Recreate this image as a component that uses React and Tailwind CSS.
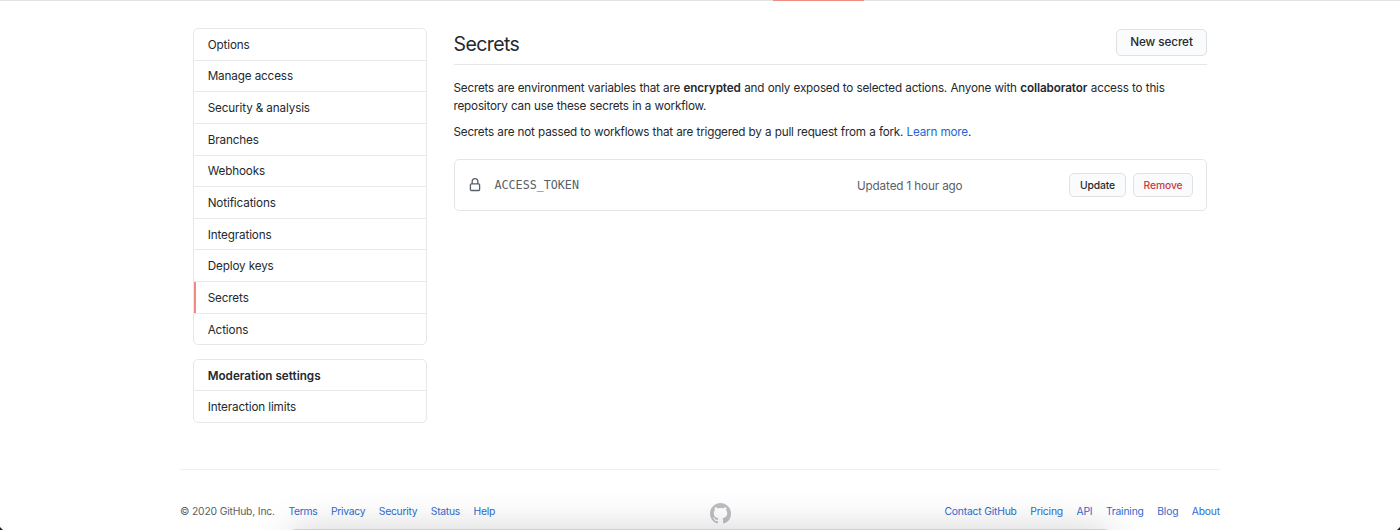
import React from "react";

const settings = [
  "Options",
  "Manage access",
  "Security & analysis",
  "Branches",
  "Webhooks",
  "Notifications",
  "Integrations",
  "Deploy keys",
  "Secrets",
  "Actions",
];

function Lock() {
  return (
    <svg viewBox="0 0 16 16" className="h-[14px] w-[14px] shrink-0" fill="#586069">
      <path
        fillRule="evenodd"
        d="M4 4v2h-.25A1.75 1.75 0 002 7.75v5.5c0 .966.784 1.75 1.75 1.75h8.5A1.75 1.75 0 0014 13.25v-5.5A1.75 1.75 0 0012.25 6H12V4a4 4 0 10-8 0zm6.5 2V4a2.5 2.5 0 10-5 0v2h5zM12 7.5h.25a.25.25 0 01.25.25v5.5a.25.25 0 01-.25.25h-8.5a.25.25 0 01-.25-.25v-5.5a.25.25 0 01.25-.25H12z"
      />
    </svg>
  );
}

function Mark() {
  return (
    <svg viewBox="0 0 16 16" className="h-[21px] w-[21px]" fill="#bcbfc3">
      <path
        fillRule="evenodd"
        d="M8 0C3.58 0 0 3.58 0 8c0 3.54 2.29 6.53 5.47 7.59.4.07.55-.17.55-.38 0-.19-.01-.82-.01-1.49-2.01.37-2.53-.49-2.69-.94-.09-.23-.48-.94-.82-1.13-.28-.15-.68-.52-.01-.53.63-.01 1.08.58 1.23.82.72 1.21 1.87.87 2.33.66.07-.52.28-.87.51-1.07-1.78-.2-3.64-.89-3.64-3.95 0-.87.31-1.59.82-2.15-.08-.2-.36-1.02.08-2.12 0 0 .67-.21 2.2.82.64-.18 1.32-.27 2-.27.68 0 1.36.09 2 .27 1.53-1.04 2.2-.82 2.2-.82.44 1.1.16 1.92.08 2.12.51.56.82 1.27.82 2.15 0 3.07-1.87 3.75-3.65 3.95.29.25.54.73.54 1.48 0 1.07-.01 1.93-.01 2.2 0 .21.15.46.55.38A8.013 8.013 0 0016 8c0-4.42-3.58-8-8-8z"
      />
    </svg>
  );
}

function FooterLinks({ items }) {
  return (
    <nav className="flex gap-[13.5px] text-[#2f6bd0]">
      {items.map((t) => (
        <a key={t} href="#">
          {t}
        </a>
      ))}
    </nav>
  );
}

export default function App() {
  return (
    <div className="relative h-[530px] overflow-hidden bg-white font-['Inter','Liberation_Sans',sans-serif] text-[11.7px] tracking-[-0.13px] text-[#24292e]">
      <div className="flex h-px bg-[#e1e2e3] pl-[773px]">
        <div className="w-[91px] bg-[#ee8b80]" />
      </div>

      <div className="flex h-[441px] gap-[26.5px] pl-[193px] pt-[27px]">
        <aside className="w-[234px] shrink-0">
          <ul className="overflow-hidden rounded-[5px] border border-[#e6e7e9]">
            {settings.map((t) => (
              <li
                key={t}
                className={
                  "flex h-[31.65px] items-center border-b border-[#e9eaec] pl-[13.7px] pt-[2.6px] last:h-[30.6px] last:border-b-0 " +
                  (t === "Secrets" ? "shadow-[inset_2px_0_0_#ee8b80]" : "")
                }
              >
                {t}
              </li>
            ))}
          </ul>
          <ul className="mt-[13.4px] overflow-hidden rounded-[5px] border border-[#e6e7e9]">
            <li className="flex h-[31.5px] items-center border-b border-[#e9eaec] pl-[13.7px] pt-[2.6px] font-semibold tracking-[0px]">
              Moderation settings
            </li>
            <li className="flex h-[31px] items-center pl-[13.7px] pt-[2.6px]">Interaction limits</li>
          </ul>
        </aside>

        <main className="w-[753.5px]">
          <header className="flex h-[37px] items-start justify-between border-b border-[#e6e7e9] pt-px">
            <h1 className="text-[19.5px] leading-[30px] tracking-[-0.6px]">Secrets</h1>
            <button className="h-[27px] w-[91px] rounded-[5px] border border-[#dfe1e3] bg-[#fafbfc] pt-[1.5px] text-[11.7px] font-medium tracking-[-0.07px]">
              New secret
            </button>
          </header>
          <p className="mt-[15px] leading-[17.6px] tracking-[-0.2px] [word-spacing:0.3px]">
            Secrets are environment variables that are{" "}
            <b className="font-semibold tracking-[-0.08px]">encrypted</b> and only exposed to selected actions. Anyone
            with <b className="font-semibold tracking-[-0.08px]">collaborator</b> access to this
            <br />
            repository can use these secrets in a workflow.
          </p>
          <p className="mt-[8.4px] leading-[17.6px] tracking-[-0.21px] [word-spacing:0.3px]">
            Secrets are not passed to workflows that are triggered by a pull request from a fork.{" "}
            <a href="#" className="text-[#2468d0]">
              Learn more
            </a>
            .
          </p>
          <div className="mt-[17.6px] flex h-[52px] items-center rounded-[5px] border border-[#e3e5e7] pl-[13px] pr-[13px] text-[#586069]">
            <Lock />
            <code className="ml-[13px] w-[362.5px] pt-[3px] font-['DejaVu_Sans_Mono',monospace] text-[11.7px] tracking-normal">
              ACCESS_TOKEN
            </code>
            <span className="pt-[4.5px]">Updated 1 hour ago</span>
            <div className="ml-auto flex gap-[7px] text-[10.3px] font-medium tracking-[-0.1px]">
              <button className="h-[24px] w-[57px] rounded-[5px] border border-[#dfe1e3] bg-[#fafbfc] pt-px text-[#24292e]">
                Update
              </button>
              <button className="h-[24px] w-[60px] rounded-[5px] border border-[#dfe1e3] bg-[#fafbfc] pt-px text-[#cb3a3f]">
                Remove
              </button>
            </div>
          </div>
        </main>
      </div>

      <footer className="mx-[180px] mt-[27px] flex items-start border-t border-[#eeeff0] pt-[33px] text-[10.3px] leading-[17px]">
        <div className="flex w-[530px] gap-[13.5px] text-[#586069]">
          <span className="tracking-[-0.16px]">© 2020 GitHub, Inc.</span>
          <div className="tracking-[-0.25px]">
            <FooterLinks items={["Terms", "Privacy", "Security", "Status", "Help"]} />
          </div>
        </div>
        <Mark />
        <div className="ml-auto tracking-[-0.17px]">
          <FooterLinks items={["Contact GitHub", "Pricing", "API", "Training", "Blog", "About"]} />
        </div>
      </footer>

      <div className="pointer-events-none absolute left-[290px] top-[529px] h-[40px] w-[820px] rounded-[6px] bg-[#cfcfcf] shadow-[0_0_38px_rgba(0,0,0,0.18)]" />
      <div className="absolute bottom-0 left-0 h-[3px] w-[3px] bg-[#222] [clip-path:polygon(0_0,100%_100%,0_100%)]" />
      <div className="absolute bottom-0 right-0 h-[3px] w-[3px] bg-[#222] [clip-path:polygon(100%_0,100%_100%,0_100%)]" />
    </div>
  );
}
